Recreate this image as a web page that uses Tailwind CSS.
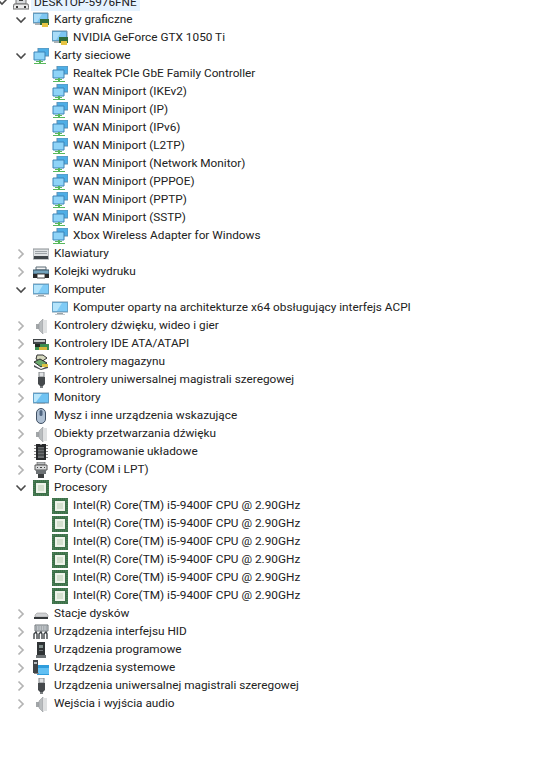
<!DOCTYPE html>
<html lang="pl">
<head>
<meta charset="UTF-8" />
<title>Menedżer urządzeń</title>
<script src="https://cdn.jsdelivr.net/npm/@tailwindcss/browser@4"></script>
</head>
<body class="bg-white text-[#222] h-[774px] overflow-hidden font-['Roboto',sans-serif] text-[11.8px]">
<svg class="hidden">
  <symbol id="chev-open" viewBox="0 0 12 12"><path d="M1.5 3.5 6 8l4.5-4.5" fill="none" stroke="#4a4a4a" stroke-width="1.6"/></symbol>
  <symbol id="chev-closed" viewBox="0 0 12 12"><path d="M3.5 1.5 8 6l-4.5 4.5" fill="none" stroke="#b4b4b4" stroke-width="1.7"/></symbol>
  <symbol id="pc" viewBox="0 0 16 16"><path d="M3 2 8 0l5 2v8H3z" fill="#d8dadc" stroke="#777"/><path d="M6 3h4v4H6z" fill="#3d3d3d"/><path d="M1 10h14l1 5H0z" fill="#ececec" stroke="#6d6d6d"/><path d="M3 12h2v2H3zm8 0h2v2h-2z" fill="#333"/></symbol>
  <symbol id="gpu" viewBox="0 0 16 16"><path d="M0 1h15v10H0z" fill="#4da6e0" stroke="#7593a6"/><path d="M1 2h13v8H1z" fill="#7cc6f2"/><path d="M1 2h8L4 10H1z" fill="#a9dcf8"/><path d="M2 11h9v2H2z" fill="#aab2b6"/><path d="M7 7h9v6H7z" fill="#2f6d3b"/><path d="M9 11h6v4H9z" fill="#e6c443"/></symbol>
  <symbol id="net" viewBox="0 0 16 16"><path d="M5 0h11v8H5z" fill="#4eaee6" stroke="#5f8fb0"/><path d="M1 4h11v8H1z" fill="#8fd4f8" stroke="#3d84b8"/><path d="M3 13h7v1H3zM1 15h12v1H1z" fill="#58b85c"/><path d="M6 12h2v3H6z" fill="#58b85c"/></symbol>
  <symbol id="keyboard" viewBox="0 0 16 16"><path d="M0 3h16v10H0z" fill="#dfe2e4" stroke="#8a8f93"/><path d="M2 5.5h12M2 7.5h12" stroke="#9da3a7"/><path d="M1 10h14v3H1z" fill="#3f4549"/></symbol>
  <symbol id="printer" viewBox="0 0 16 16"><path d="M3 3h10v3H3z" fill="#f4f4f4" stroke="#5b6b75"/><path d="M0 6h16v4H0z" fill="#74a4bd" stroke="#3a5566"/><path d="M4 10h8v4H4z" fill="#fff" stroke="#444"/><path d="M0 10h4v4H0zM12 10h4v4h-4z" fill="#2a2a2a"/></symbol>
  <symbol id="screen" viewBox="0 0 16 16"><path d="M0 2h16v10H0z" fill="#50aee6" stroke="#7f9cb0"/><path d="M1 3h14v8H1z" fill="#7fcbf6"/><path d="M1 3h9L5 11H1z" fill="#b4e4fb"/><path d="M5 13h6v1H5z" fill="#9aa3a8"/><path d="M3 14h10v1H3z" fill="#c3c8cb"/></symbol>
  <symbol id="speaker" viewBox="0 0 16 16"><path d="M3 6h3v5H3z" fill="#a2a6a8"/><path d="M6 5l4-4v15l-4-4z" fill="#b9bdbf" stroke="#93979a" stroke-width=".6"/><path d="M11 2h3v13h-3z" fill="#dfe1e2"/></symbol>
  <symbol id="ide" viewBox="0 0 16 16"><path d="M0 3h13v5H0z" fill="#3f4447"/><path d="M1 4h11v2H1z" fill="#c3c7ca"/><path d="M2 8h14v6H2z" fill="#3c8f52"/><path d="M6 11h8v3H6z" fill="#d6b83c"/><path d="M2 8h5v3H2z" fill="#1f2a22"/></symbol>
  <symbol id="storage" viewBox="0 0 16 16"><path d="M4 1h6l4 3-6 4-5-3z" fill="#d5d8bd" stroke="#333"/><path d="M1 8l6-3 7 4-6 4z" fill="#6aa86c" stroke="#2d2d2d"/><path d="M1 11l7 4 7-3v2l-7 2-7-3z" fill="#4a4f52"/><path d="M9 10h6v3H9z" fill="#dcc246"/></symbol>
  <symbol id="usb" viewBox="0 0 16 16"><path d="M6 0h5v5H6z" fill="#dfe1e3" stroke="#808487"/><path d="M5 5h7v7l-2 2H7l-2-2z" fill="#45494c"/><path d="M7 14h3v2H7z" fill="#787c7f"/></symbol>
  <symbol id="monitor" viewBox="0 0 16 16"><path d="M0 3h16v10H0z" fill="#3fa3e2" stroke="#7f9cb0"/><path d="M1 4h14v8H1z" fill="#6fc3f3"/><path d="M1 4h8L3 12H1z" fill="#b9e6fb"/><path d="M4 13h8v1H4z" fill="#a3adb3"/></symbol>
  <symbol id="mouse" viewBox="0 0 16 16"><rect x="3.5" y=".5" width="9" height="15" rx="4.5" fill="#aebfd2" stroke="#3f4f63"/><rect x="6.5" y="2" width="3" height="6" rx="1.5" fill="#4f6580"/></symbol>
  <symbol id="firmware" viewBox="0 0 16 16"><path d="M3 0h4l1 1 1-1h4v16H3z" fill="#26282a"/><path d="M1 1h2v1H1zm0 3h2v1H1zm0 3h2v1H1zm0 3h2v1H1zm0 3h2v1H1zM13 1h2v1h-2zm0 3h2v1h-2zm0 3h2v1h-2zm0 3h2v1h-2zm0 3h2v1h-2z" fill="#888"/><path d="M5 3h6v11H5z" fill="#6b6e70"/><path d="M5 5h6M5 8h6M5 11h6" stroke="#2a2c2e"/></symbol>
  <symbol id="port" viewBox="0 0 16 16"><path d="M4 0h8v3H4z" fill="#b8bbbd" stroke="#555" stroke-width=".6"/><path d="M2 3h12v5H2z" fill="#d8dadb" stroke="#555"/><path d="M4 5h1v1H4zm3 0h2v1H7zm4 0h1v1h-1z" fill="#444"/><path d="M3 8h10v4H3z" fill="#6d7275"/><path d="M5 12h6v4H5z" fill="#3c3f41"/></symbol>
  <symbol id="cpu" viewBox="0 0 16 16"><path d="M0 0h16v16H0z" fill="#3d7049"/><path d="M1 1h14M1 15h14M1 1v14M15 1v14" stroke="#578a62" stroke-dasharray="1 1"/><path d="M3 3h10v10H3z" fill="#eef3ea"/><path d="M5 5h6v6H5z" fill="#d4e0cf"/></symbol>
  <symbol id="disk" viewBox="0 0 16 16"><path d="M2 9l2-2h9l2 2v2H2z" fill="#cfd1d3" stroke="#888" stroke-width=".5"/><path d="M1 11h14v2H1z" fill="#34383a"/></symbol>
  <symbol id="hid" viewBox="0 0 16 16"><path d="M2 1h13v6H2z" fill="#cfd4d8" stroke="#6e7478"/><path d="M3 3h11M3 5h11" stroke="#6e7478" stroke-dasharray="1 .7"/><path d="M1 15V10l2-2 1 2v5M6 15V10l2-2 1 2v5M11 15V10l2-2 1 2v5" fill="none" stroke="#3d4245" stroke-width="1.4"/></symbol>
  <symbol id="program" viewBox="0 0 16 16"><path d="M4 0h8v13H4z" fill="#2f3335"/><path d="M6 3h4v3H6z" fill="#7f8d8a"/><path d="M6 8h4v1H6z" fill="#70767a"/><path d="M3 13h10v3H3z" fill="#6d7275"/></symbol>
  <symbol id="system" viewBox="0 0 16 16"><path d="M4 5h12v10H4z" fill="#2f9ddc"/><path d="M5 8h11v6H5z" fill="#62c0f3"/><path d="M0 0h5v13H0z" fill="#3f4447"/><path d="M1 2h3v2H1z" fill="#b8bcbf"/><path d="M1 13h5v1H1z" fill="#888"/></symbol>
</svg>

<ul class="-mt-[7px]">
  <li class="flex items-center h-[18px]">
    <svg class="w-3 h-3 -ml-1 mr-[6px]"><use href="#chev-open"/></svg>
    <svg class="w-4 h-4 mr-[2px] ml-[-1px]"><use href="#pc"/></svg>
    <span class="bg-[#e5f3ff] pl-[3px] pr-[3px] h-[18px] leading-[18px]">DESKTOP-5976FNE</span>
  </li>

  <li class="flex items-center h-[18px] pl-[15px]"><svg class="w-3 h-3 mr-[6px]"><use href="#chev-open"/></svg><svg class="w-4 h-4 mr-[5px]"><use href="#gpu"/></svg><span>Karty graficzne</span></li>
  <li class="flex items-center h-[18px] pl-[52px]"><svg class="w-4 h-4 mr-[5px]"><use href="#gpu"/></svg><span>NVIDIA GeForce GTX 1050 Ti</span></li>

  <li class="flex items-center h-[18px] pl-[15px]"><svg class="w-3 h-3 mr-[6px]"><use href="#chev-open"/></svg><svg class="w-4 h-4 mr-[5px]"><use href="#net"/></svg><span>Karty sieciowe</span></li>
  <li class="flex items-center h-[18px] pl-[52px]"><svg class="w-4 h-4 mr-[5px]"><use href="#net"/></svg><span>Realtek PCIe GbE Family Controller</span></li>
  <li class="flex items-center h-[18px] pl-[52px]"><svg class="w-4 h-4 mr-[5px]"><use href="#net"/></svg><span>WAN Miniport (IKEv2)</span></li>
  <li class="flex items-center h-[18px] pl-[52px]"><svg class="w-4 h-4 mr-[5px]"><use href="#net"/></svg><span>WAN Miniport (IP)</span></li>
  <li class="flex items-center h-[18px] pl-[52px]"><svg class="w-4 h-4 mr-[5px]"><use href="#net"/></svg><span>WAN Miniport (IPv6)</span></li>
  <li class="flex items-center h-[18px] pl-[52px]"><svg class="w-4 h-4 mr-[5px]"><use href="#net"/></svg><span>WAN Miniport (L2TP)</span></li>
  <li class="flex items-center h-[18px] pl-[52px]"><svg class="w-4 h-4 mr-[5px]"><use href="#net"/></svg><span>WAN Miniport (Network Monitor)</span></li>
  <li class="flex items-center h-[18px] pl-[52px]"><svg class="w-4 h-4 mr-[5px]"><use href="#net"/></svg><span>WAN Miniport (PPPOE)</span></li>
  <li class="flex items-center h-[18px] pl-[52px]"><svg class="w-4 h-4 mr-[5px]"><use href="#net"/></svg><span>WAN Miniport (PPTP)</span></li>
  <li class="flex items-center h-[18px] pl-[52px]"><svg class="w-4 h-4 mr-[5px]"><use href="#net"/></svg><span>WAN Miniport (SSTP)</span></li>
  <li class="flex items-center h-[18px] pl-[52px]"><svg class="w-4 h-4 mr-[5px]"><use href="#net"/></svg><span>Xbox Wireless Adapter for Windows</span></li>

  <li class="flex items-center h-[18px] pl-[15px]"><svg class="w-3 h-3 mr-[6px]"><use href="#chev-closed"/></svg><svg class="w-4 h-4 mr-[5px]"><use href="#keyboard"/></svg><span>Klawiatury</span></li>
  <li class="flex items-center h-[18px] pl-[15px]"><svg class="w-3 h-3 mr-[6px]"><use href="#chev-closed"/></svg><svg class="w-4 h-4 mr-[5px]"><use href="#printer"/></svg><span>Kolejki wydruku</span></li>
  <li class="flex items-center h-[18px] pl-[15px]"><svg class="w-3 h-3 mr-[6px]"><use href="#chev-open"/></svg><svg class="w-4 h-4 mr-[5px]"><use href="#screen"/></svg><span>Komputer</span></li>
  <li class="flex items-center h-[18px] pl-[52px]"><svg class="w-4 h-4 mr-[5px]"><use href="#screen"/></svg><span>Komputer oparty na architekturze x64 obsługujący interfejs ACPI</span></li>
  <li class="flex items-center h-[18px] pl-[15px]"><svg class="w-3 h-3 mr-[6px]"><use href="#chev-closed"/></svg><svg class="w-4 h-4 mr-[5px]"><use href="#speaker"/></svg><span>Kontrolery dźwięku, wideo i gier</span></li>
  <li class="flex items-center h-[18px] pl-[15px]"><svg class="w-3 h-3 mr-[6px]"><use href="#chev-closed"/></svg><svg class="w-4 h-4 mr-[5px]"><use href="#ide"/></svg><span>Kontrolery IDE ATA/ATAPI</span></li>
  <li class="flex items-center h-[18px] pl-[15px]"><svg class="w-3 h-3 mr-[6px]"><use href="#chev-closed"/></svg><svg class="w-4 h-4 mr-[5px]"><use href="#storage"/></svg><span>Kontrolery magazynu</span></li>
  <li class="flex items-center h-[18px] pl-[15px]"><svg class="w-3 h-3 mr-[6px]"><use href="#chev-closed"/></svg><svg class="w-4 h-4 mr-[5px]"><use href="#usb"/></svg><span>Kontrolery uniwersalnej magistrali szeregowej</span></li>
  <li class="flex items-center h-[18px] pl-[15px]"><svg class="w-3 h-3 mr-[6px]"><use href="#chev-closed"/></svg><svg class="w-4 h-4 mr-[5px]"><use href="#monitor"/></svg><span>Monitory</span></li>
  <li class="flex items-center h-[18px] pl-[15px]"><svg class="w-3 h-3 mr-[6px]"><use href="#chev-closed"/></svg><svg class="w-4 h-4 mr-[5px]"><use href="#mouse"/></svg><span>Mysz i inne urządzenia wskazujące</span></li>
  <li class="flex items-center h-[18px] pl-[15px]"><svg class="w-3 h-3 mr-[6px]"><use href="#chev-closed"/></svg><svg class="w-4 h-4 mr-[5px]"><use href="#speaker"/></svg><span>Obiekty przetwarzania dźwięku</span></li>
  <li class="flex items-center h-[18px] pl-[15px]"><svg class="w-3 h-3 mr-[6px]"><use href="#chev-closed"/></svg><svg class="w-4 h-4 mr-[5px]"><use href="#firmware"/></svg><span>Oprogramowanie układowe</span></li>
  <li class="flex items-center h-[18px] pl-[15px]"><svg class="w-3 h-3 mr-[6px]"><use href="#chev-closed"/></svg><svg class="w-4 h-4 mr-[5px]"><use href="#port"/></svg><span>Porty (COM i LPT)</span></li>
  <li class="flex items-center h-[18px] pl-[15px]"><svg class="w-3 h-3 mr-[6px]"><use href="#chev-open"/></svg><svg class="w-4 h-4 mr-[5px]"><use href="#cpu"/></svg><span>Procesory</span></li>
  <li class="flex items-center h-[18px] pl-[52px]"><svg class="w-4 h-4 mr-[5px]"><use href="#cpu"/></svg><span>Intel(R) Core(TM) i5-9400F CPU @ 2.90GHz</span></li>
  <li class="flex items-center h-[18px] pl-[52px]"><svg class="w-4 h-4 mr-[5px]"><use href="#cpu"/></svg><span>Intel(R) Core(TM) i5-9400F CPU @ 2.90GHz</span></li>
  <li class="flex items-center h-[18px] pl-[52px]"><svg class="w-4 h-4 mr-[5px]"><use href="#cpu"/></svg><span>Intel(R) Core(TM) i5-9400F CPU @ 2.90GHz</span></li>
  <li class="flex items-center h-[18px] pl-[52px]"><svg class="w-4 h-4 mr-[5px]"><use href="#cpu"/></svg><span>Intel(R) Core(TM) i5-9400F CPU @ 2.90GHz</span></li>
  <li class="flex items-center h-[18px] pl-[52px]"><svg class="w-4 h-4 mr-[5px]"><use href="#cpu"/></svg><span>Intel(R) Core(TM) i5-9400F CPU @ 2.90GHz</span></li>
  <li class="flex items-center h-[18px] pl-[52px]"><svg class="w-4 h-4 mr-[5px]"><use href="#cpu"/></svg><span>Intel(R) Core(TM) i5-9400F CPU @ 2.90GHz</span></li>

  <li class="flex items-center h-[18px] pl-[15px]"><svg class="w-3 h-3 mr-[6px]"><use href="#chev-closed"/></svg><svg class="w-4 h-4 mr-[5px]"><use href="#disk"/></svg><span>Stacje dysków</span></li>
  <li class="flex items-center h-[18px] pl-[15px]"><svg class="w-3 h-3 mr-[6px]"><use href="#chev-closed"/></svg><svg class="w-4 h-4 mr-[5px]"><use href="#hid"/></svg><span>Urządzenia interfejsu HID</span></li>
  <li class="flex items-center h-[18px] pl-[15px]"><svg class="w-3 h-3 mr-[6px]"><use href="#chev-closed"/></svg><svg class="w-4 h-4 mr-[5px]"><use href="#program"/></svg><span>Urządzenia programowe</span></li>
  <li class="flex items-center h-[18px] pl-[15px]"><svg class="w-3 h-3 mr-[6px]"><use href="#chev-closed"/></svg><svg class="w-4 h-4 mr-[5px]"><use href="#system"/></svg><span>Urządzenia systemowe</span></li>
  <li class="flex items-center h-[18px] pl-[15px]"><svg class="w-3 h-3 mr-[6px]"><use href="#chev-closed"/></svg><svg class="w-4 h-4 mr-[5px]"><use href="#usb"/></svg><span>Urządzenia uniwersalnej magistrali szeregowej</span></li>
  <li class="flex items-center h-[18px] pl-[15px]"><svg class="w-3 h-3 mr-[6px]"><use href="#chev-closed"/></svg><svg class="w-4 h-4 mr-[5px]"><use href="#speaker"/></svg><span>Wejścia i wyjścia audio</span></li>
</ul>
</body>
</html>
